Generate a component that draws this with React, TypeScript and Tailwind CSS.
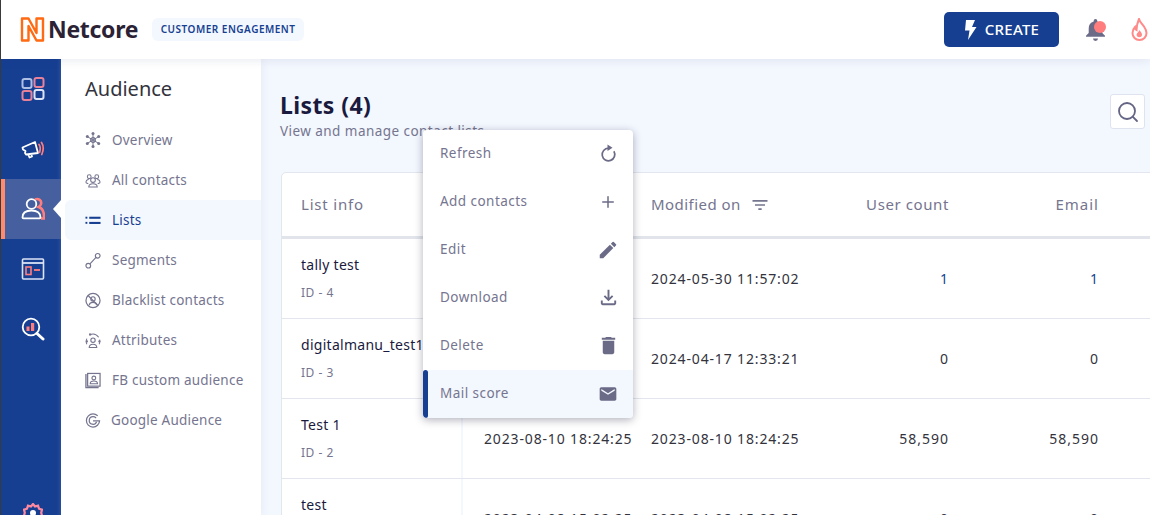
import React from "react";
import { Plus, Search } from "lucide-react";
import { MdEdit, MdOutlineFileDownload, MdDelete, MdEmail, MdFilterList } from "react-icons/md";

const S = ({ children, w = 24, h = 24, vb = "0 0 24 24", className = "" }: any) => (
  <svg width={w} height={h} viewBox={vb} fill="none" className={className}>{children}</svg>
);
const G = "#74748f";
const R = "#ff7d7d";
const W = "#ffffff";

const Logo = () => (
  <S w={25} h={25} vb="0 0 25 25">
    <path d="M2 1.500H8.500L16.500 16V1.500H23V23.500H16.500L8.500 9V23.500H2Z" stroke="#ff6a13" strokeWidth="2.400" strokeLinejoin="round" />
  </S>
);
const RailGrid = () => (
  <S>
    <rect x="1.500" y="2" width="9" height="9" rx="2" stroke="#aebfe6" strokeWidth="2" />
    <rect x="13.500" y="1" width="9" height="9" rx="2" stroke="#e8829a" strokeWidth="2" />
    <rect x="1.500" y="14" width="9" height="9" rx="2" stroke="#e8829a" strokeWidth="2" />
    <rect x="13.500" y="13" width="9" height="9" rx="2" stroke="#dbe4f7" strokeWidth="2" />
  </S>
);
const RailMega = () => (
  <S>
    <path d="M1.500 10.500 14 5l3 11-12 1.500-1-1.500 .5-2-2.500-1.500Z M7 17l1.500 3.500 2.500-1-1-3" stroke={W} strokeWidth="1.800" strokeLinejoin="round" />
    <path d="M18 7.500c1.500 2 1.500 5 .5 8M20.500 5.500c2 3 2 8 .3 12" stroke={R} strokeWidth="1.700" strokeLinecap="round" />
  </S>
);
const RailUsers = () => (
  <S>
    <path d="M14 2.500c3.500-1.500 7 1 6 4.500-.4 1.500-1 2.300-2.300 3 3 1 5 3.500 5.300 8.500v3h-3" stroke={R} strokeWidth="2.600" />
    <circle cx="10.500" cy="7" r="4.800" stroke={W} strokeWidth="1.800" fill="#46609f" />
    <path d="M1.500 20.500c0-4.500 3.500-7 9-7s9 2.500 9 7c0 .5-.5.8-1 .8H2.500c-.5 0-1-.3-1-.8Z" stroke={W} strokeWidth="1.800" fill="#46609f" />
  </S>
);
const RailWin = () => (
  <S>
    <rect x="1.500" y="2" width="21" height="20" rx="1" stroke="#dbe4f7" strokeWidth="1.600" />
    <path d="M2 6h20" stroke="#dbe4f7" strokeWidth="1.800" />
    <rect x="5" y="10" width="5" height="7.500" stroke={R} strokeWidth="1.600" />
    <path d="M13 13h6" stroke={R} strokeWidth="1.800" />
  </S>
);
const RailSearch = () => (
  <S>
    <circle cx="10" cy="10" r="8.300" stroke={W} strokeWidth="1.800" />
    <path d="M16 16.500l6 5.500" stroke={W} strokeWidth="3" strokeLinecap="round" />
    <rect x="5.500" y="9.500" width="3" height="4.500" fill={R} />
    <rect x="10" y="6" width="3.200" height="8" fill={R} />
  </S>
);

const IOverview = () => (
  <S w={16} h={16} vb="0 0 16 16">
    <circle cx="8" cy="8" r="2.300" fill="none" stroke={G} strokeWidth="1.300" />
    <path d="M8 1.500v13M2.300 4.600l11.400 6.800M13.700 4.600 2.300 11.400" stroke={G} strokeWidth="1" />
    {[[8, 1.500], [8, 14.500], [2.300, 4.600], [13.700, 4.600], [2.300, 11.400], [13.700, 11.400]].map(([x, y], i) => (
      <circle key={i} cx={x} cy={y} r="1.500" fill={G} />
    ))}
  </S>
);
const IAll = () => (
  <S w={17} h={17} vb="0 0 17 17">
    <circle cx="8.500" cy="8" r="2.500" stroke={G} strokeWidth="1.100" />
    <path d="M4 15.500c0-2.500 2-3.500 4.500-3.500s4.500 1 4.500 3.500Z" stroke={G} strokeWidth="1.100" />
    <circle cx="4.500" cy="4.500" r="2" stroke={G} strokeWidth="1.100" />
    <circle cx="12.500" cy="4.500" r="2" stroke={G} strokeWidth="1.100" />
    <path d="M1 11c0-2 1.200-3.500 3-3.500M16 11c0-2-1.200-3.500-3-3.500M1 11l2.500 1M16 11l-2.500 1" stroke={G} strokeWidth="1.100" />
  </S>
);
const ILists = () => (
  <S w={17} h={17} vb="0 0 17 17">
    <rect x="0.500" y="4.500" width="2" height="2" fill="#163f92" />
    <rect x="0.500" y="10" width="2" height="2" fill="#163f92" />
    <rect x="4.500" y="4.500" width="12" height="2.200" fill="#163f92" />
    <rect x="4.500" y="10" width="12" height="2.200" fill="#163f92" />
  </S>
);
const ISeg = () => (
  <S w={17} h={17} vb="0 0 17 17">
    <circle cx="3.500" cy="14" r="2.500" stroke={G} strokeWidth="1.200" />
    <circle cx="13.500" cy="3.500" r="2.500" stroke={G} strokeWidth="1.200" />
    <path d="M5.300 12.200 11.700 5.300" stroke={G} strokeWidth="1.200" />
  </S>
);
const IBlack = () => (
  <S w={17} h={17} vb="0 0 17 17">
    <circle cx="8.500" cy="8.500" r="7.500" stroke={G} strokeWidth="1.300" />
    <path d="M3.200 3.200l10.600 10.600" stroke={G} strokeWidth="1.200" />
    <circle cx="8.500" cy="6.800" r="2.300" stroke={G} strokeWidth="1.200" />
    <path d="M4.500 13.500c.3-2 2-3 4-3s3.700 1 4 3" stroke={G} strokeWidth="1.200" />
  </S>
);
const IAttr = () => (
  <S w={17} h={17} vb="0 0 17 17">
    <circle cx="8.500" cy="8.200" r="2.300" stroke={G} strokeWidth="1.200" />
    <path d="M4.500 16c0-2.500 1.800-3.500 4-3.500s4 1 4 3.500Z" stroke={G} strokeWidth="1.200" />
    <path d="M5 2.500c3-1.500 7-1 9.500 2.500M2 6.500C1 8.500 1 10.500 2 12.500M15.500 7.500c.5 2 .3 3.500-.5 5" stroke={G} strokeWidth="1.100" />
    <rect x="4.300" y="1" width="2.200" height="2.200" fill={G} />
    <circle cx="2" cy="9.500" r="1.200" fill={G} />
    <circle cx="15.300" cy="9.500" r="1.200" fill={G} />
  </S>
);
const IFb = () => (
  <S w={17} h={17} vb="0 0 17 17">
    <path d="M2.500 1v14.500H16" stroke={G} strokeWidth="1.400" transform="translate(-1.500 0.500)" />
    <rect x="2.800" y="1" width="13.200" height="13.500" stroke={G} strokeWidth="1.300" />
    <circle cx="9.400" cy="5.800" r="2" stroke={G} strokeWidth="1.200" />
    <path d="M5.500 12c0-2 1.500-3 3.900-3s3.900 1 3.900 3Z" stroke={G} strokeWidth="1.200" />
  </S>
);
const IGoogle = () => (
  <S w={17} h={17} vb="0 0 17 17">
    <path d="M13.500 3.400C12 2.200 10.300 1.500 8.500 1.500a7 7 0 1 0 7 7.300H8.500" stroke={G} strokeWidth="1.300" />
    <path d="M11.800 5.800c-.9-.8-2-1.300-3.300-1.300a4 4 0 1 0 3.800 5.300" stroke={G} strokeWidth="1.300" />
  </S>
);

const IRefresh = () => (
  <svg width="17" height="19" viewBox="0 0 17 19" fill="none">
    <path d="M8.500 4.200A6.300 6.300 0 1 0 13.900 7.300" stroke="#6b6b88" strokeWidth="1.700" />
    <path d="M7.500 0.500 12.500 3.800 7.500 7Z" fill="#6b6b88" />
  </svg>
);

const MENU = [
  { t: "Overview", i: <IOverview /> },
  { t: "All contacts", i: <IAll /> },
  { t: "Lists", i: <ILists />, a: true },
  { t: "Segments", i: <ISeg /> },
  { t: "Blacklist contacts", i: <IBlack /> },
  { t: "Attributes", i: <IAttr /> },
  { t: "FB custom audience", i: <IFb /> },
  { t: "Google Audience", i: <IGoogle />, g: true },
];

const ROWS = [
  { n: "tally test", id: "ID - 4", c: "", m: "2024-05-30 11:57:02", u: "1", e: "1", blue: true },
  { n: "digitalmanu_test1", id: "ID - 3", c: "", m: "2024-04-17 12:33:21", u: "0", e: "0" },
  { n: "Test 1", id: "ID - 2", c: "2023-08-10 18:24:25", m: "2023-08-10 18:24:25", u: "58,590", e: "58,590" },
  { n: "test", id: "ID - 1", c: "2023-04-08 15:02:25", m: "2023-04-08 15:02:25", u: "0", e: "0" },
];

const ACT = [
  { t: "Refresh", i: <IRefresh /> },
  { t: "Add contacts", i: <Plus size={18} strokeWidth={2} /> },
  { t: "Edit", i: <MdEdit size={22} /> },
  { t: "Download", i: <MdOutlineFileDownload size={23} /> },
  { t: "Delete", i: <MdDelete size={23} /> },
  { t: "Mail score", i: <MdEmail size={20} />, a: true },
];

export default function App() {
  return (
    <div className="relative flex h-[515px] w-[1150px] flex-col overflow-hidden border-l border-[#3a3a3a] bg-white font-['Noto_Sans',sans-serif]">
      <header className="relative z-20 flex h-[59px] shrink-0 items-center bg-white pl-[19px] pr-[2px] shadow-[0_1px_10px_rgba(30,50,110,0.10)]">
        <Logo />
        <span className="ml-[3px] text-[23px] font-bold leading-none tracking-[-0.3px] text-[#2b2235]">Netcore</span>
        <span className="ml-[14px] flex h-[23px] w-[152px] items-center justify-center rounded-md bg-[#f3f7fe] text-[10px] font-semibold tracking-[0.5px] text-[#163f92]">CUSTOMER ENGAGEMENT</span>
        <button className="ml-auto flex h-[35px] w-[115px] items-center justify-center gap-[8px] rounded-[5px] bg-[#163f92] text-[15px] font-medium tracking-[0.25px] text-white">
          <svg width="13" height="20" viewBox="0 0 13 20" fill="#fff"><path d="M2 0h9L8 7h4.500L4 20l1.500-9.500H1Z" /></svg>
          CREATE
        </button>
        <span className="relative ml-[25px] flex w-[23px] text-[#6b6b88]">
          <svg width="23" height="24" viewBox="0 0 23 24" fill="#6b6b88"><path d="M11.500 1a1.800 1.800 0 0 1 1.800 1.800v.6c3.300.8 5 3.600 5 7v4.500l2.700 2.900v1H2v-1l2.700-2.900v-4.500c0-3.400 1.700-6.200 5-7v-.6A1.800 1.800 0 0 1 11.500 1Z" /><path d="M9 20.500h5a2.500 2.500 0 0 1-5 0Z" /></svg>
          <span className="absolute left-[10px] top-[3px] h-3 w-3 rounded-full bg-[#ff7d7d]" />
        </span>
        <span className="ml-[24px] flex">
          <svg width="17" height="23" viewBox="0 0 17 23" fill="none"><path d="M8 1c1 3.500 3 4.500 5 7.500 1.300 2 2.500 4 2.500 6.500 0 4-3 7-7 7s-7-3-7-7c0-2.500 1-4.500 2.500-6 .2 1.500.7 2.500 1.500 3C5.500 8 6.500 4.500 8 1Z" stroke="#ff8a8a" strokeWidth="2" /><path d="M8.500 12c.5 1.500 2.500 2.500 2.500 4.500a2.700 2.700 0 0 1-5.400 0c0-1.500 2.400-2.500 2.900-4.500Z" fill="#ff8a8a" /></svg>
        </span>
      </header>

      <div className="flex min-h-0 flex-1">
        <nav className="relative z-10 flex w-[60px] shrink-0 flex-col items-center bg-[#163f92] shadow-[inset_-4px_0_4px_-3px_rgba(255,255,255,0.12)]">
          <div className="flex h-[60px] w-full items-center justify-center pb-[1px] pl-1"><RailGrid /></div>
          <div className="flex h-[60px] w-full items-center justify-center pl-1"><RailMega /></div>
          <div className="relative flex h-[60px] w-full items-center justify-center border-l-4 border-[#ff8a70] bg-[#46609f]">
            <RailUsers />
            <span className="absolute right-0 top-[21px] h-0 w-0 border-y-[9px] border-r-[8px] border-y-transparent border-r-white" />
          </div>
          <div className="flex h-[60px] w-full items-center justify-center pl-1"><RailWin /></div>
          <div className="flex h-[60px] w-full items-center justify-center pl-1"><RailSearch /></div>
          <div className="mt-auto flex h-[12px] w-full justify-center overflow-hidden pl-1">
            <svg width="20" height="20" viewBox="0 0 20 20" className="shrink-0"><path d="M10 1l2 2.500 3-.8 1 3 3 1-.8 3 .8 3-3 1-1 3-3-.8-2 2.500-2-2.500-3 .8-1-3-3-1 .8-3-.8-3 3-1 1-3 3 .8Z" fill="none" stroke="#ff8aa0" strokeWidth="2.200" /><circle cx="10" cy="10" r="3" fill="#fff" /></svg>
          </div>
        </nav>

        <aside className="relative z-[5] w-[200px] shrink-0 bg-white pl-1 shadow-[3px_0_8px_rgba(30,50,110,0.04)]">
          <h2 className="pl-5 pt-[18px] text-[20px] font-normal leading-[24px] text-[#33333d]">Audience</h2>
          <ul className="mt-[19px]">
            {MENU.map((m) => (
              <li key={m.t} className={`flex h-10 items-center rounded-l-md pl-5 text-[13.500px] tracking-[0.22px] ${m.a ? "bg-[#f3f7fe] text-[#163f92]" : "text-[#75758f]"}`}>
                <span className="flex w-4 shrink-0 justify-center">{m.i}</span>
                <span className={m.g ? "ml-[10px]" : "ml-[11px]"}>{m.t}</span>
              </li>
            ))}
          </ul>
        </aside>

        <main className="relative min-w-0 flex-1 bg-[#f3f7fe] pl-5 pt-[32px]">
          <div className="-ml-px flex items-start">
            <div>
              <h1 className="text-[23px] font-bold leading-[28px] tracking-[0.4px] text-[#1a1a3e]">Lists (4)</h1>
              <p className="mt-[2px] text-[13.500px] leading-[20px] tracking-[0.45px] text-[#75758f]">View and manage contact lists</p>
            </div>
            <button className="absolute left-[849px] top-[35px] flex h-[35px] w-[35px] items-center justify-center rounded-[3px] border border-[#dfe3ef] bg-white">
              <Search size={24} strokeWidth={1.800} className="text-[#646485]" />
            </button>
          </div>

          <div className="mt-[31px] w-[920px] rounded-tl-[5px] border border-[#e3e6ee] bg-white">
            <div className="flex h-[66px] items-center whitespace-nowrap border-b-[3px] border-[#e1e4ea] text-[15px] tracking-[0.6px] text-[#75758f]">
              <div className="w-[181px] shrink-0 pl-[19px] tracking-[0.8px]">List info</div>
              <div className="w-[168px] shrink-0 pl-[22px]">Created on</div>
              <div className="flex w-[170px] shrink-0 items-center gap-[9px] pl-[20px] tracking-[0.45px]">Modified on <MdFilterList size={20} /></div>
              <div className="w-[148px] shrink-0 text-right">User count</div>
              <div className="w-[150px] shrink-0 text-right tracking-[1px]">Email</div>
            </div>
            {ROWS.map((r) => (
              <div key={r.n} className="flex h-[80px] whitespace-nowrap border-b border-[#e3e6ee] text-[14px]">
                <div className="w-[181px] shrink-0 border-r-2 border-[#f3f7fe] pl-[19px] pt-[16px]">
                  <div className="leading-[20px] tracking-[0.28px] text-[#1a1a3e]">{r.n}</div>
                  <div className="mt-[9px] text-[12px] leading-[18px] tracking-[0.5px] text-[#75758f]">{r.id}</div>
                </div>
                <div className="flex w-[168px] shrink-0 items-center pl-[21px] tracking-[0.85px] text-[#33333d]">{r.c}</div>
                <div className="flex w-[170px] shrink-0 items-center pl-[20px] tracking-[0.85px] text-[#33333d]">{r.m}</div>
                <div className={`flex w-[148px] shrink-0 items-center justify-end tracking-[1px] ${r.blue ? "text-[#163f92]" : "text-[#33333d]"}`}>{r.u}</div>
                <div className={`flex w-[150px] shrink-0 items-center justify-end tracking-[1px] ${r.blue ? "text-[#163f92]" : "text-[#33333d]"}`}>{r.e}</div>
              </div>
            ))}
          </div>

          <div className="absolute left-[162px] top-[71px] z-30 w-[210px] overflow-hidden rounded-[4px] bg-white shadow-[0_2px_8px_rgba(30,30,60,0.35)]">
            {ACT.map((a) => (
              <div key={a.t} className={`relative flex h-12 items-center justify-between pb-[1px] pl-[17px] pr-[13px] text-[13.500px] tracking-[0.45px] text-[#75758f] ${a.a ? "bg-[#f3f7fe]" : ""}`}>
                {a.a && <span className="absolute bottom-0 left-0 top-0 w-[5px] rounded-[3px] bg-[#163f92]" />}
                <span>{a.t}</span>
                <span className="flex w-6 justify-center text-[#6b6b88]">{a.i}</span>
              </div>
            ))}
          </div>
        </main>
      </div>
    </div>
  );
}
